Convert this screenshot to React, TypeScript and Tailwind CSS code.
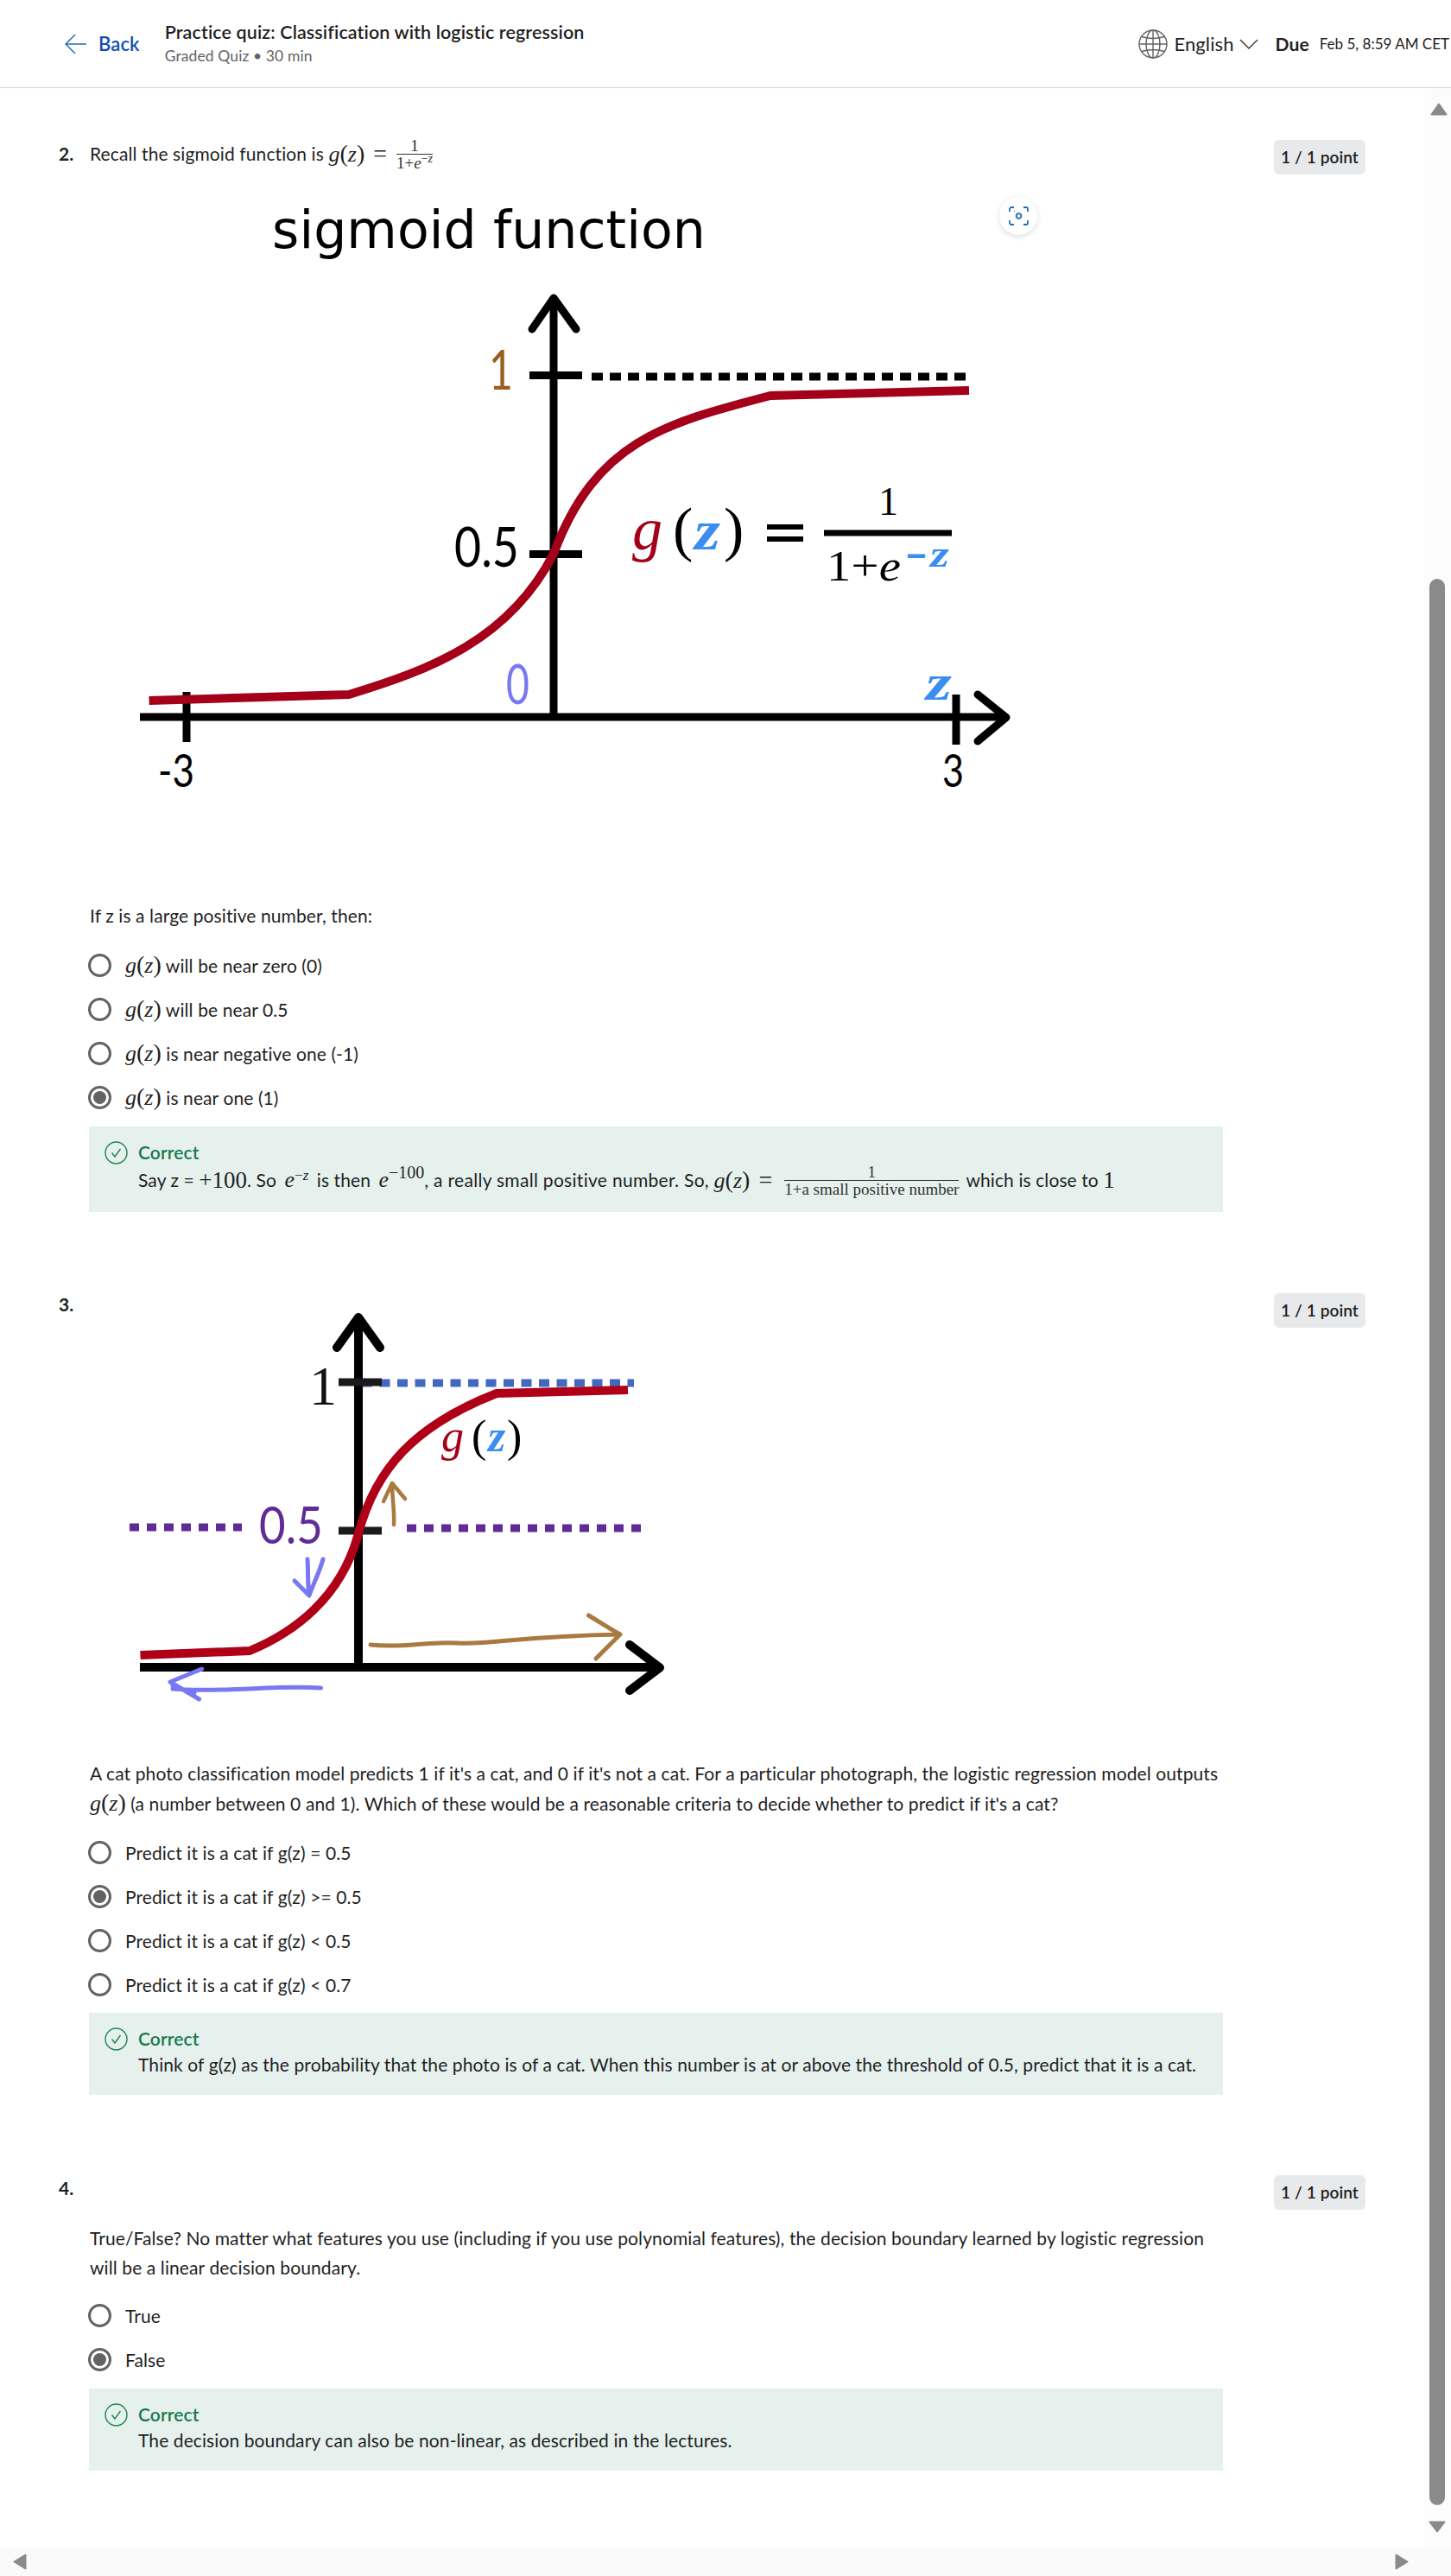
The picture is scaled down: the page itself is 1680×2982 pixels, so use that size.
import type { ReactNode } from "react";

const serif = "font-['Liberation_Serif',serif] tracking-normal";

function G() {
  return (
    <span className={`${serif} text-[26px] whitespace-nowrap tracking-[1.8px]`}>
      <i>g</i>
      <span className="text-[28px]">(</span>
      <i>z</i>
      <span className="text-[28px]">)</span>
    </span>
  );
}

function Frac({ top, bottom, wide }: { top: ReactNode; bottom: ReactNode; wide?: boolean }) {
  return (
    <span className={`${serif} inline-flex flex-col items-center align-middle mr-[8px] text-[#333] text-[19px] leading-[15px] ${wide ? "ml-[14px] tracking-[1.6px]" : "ml-[11px] tracking-[3px]"}`}>
      <span className="pb-[2px]">{top}</span>
      <span className="border-t border-[#333] pt-[2px] w-full text-center whitespace-nowrap">{bottom}</span>
    </span>
  );
}

function Radio({ on, children }: { on?: boolean; children: ReactNode }) {
  return (
    <div className="flex items-center h-[51px] gap-[16px] text-[#1f1f1f]">
      <span className="w-[27px] h-[27px] ml-[-2px] rounded-full border-[3px] border-[#636363] flex items-center justify-center bg-white">
        {on && <span className="w-[15px] h-[15px] rounded-full bg-[#636363]" />}
      </span>
      <span>{children}</span>
    </div>
  );
}

function Feedback({ h, mt, children }: { h: string; mt: string; children: ReactNode }) {
  return (
    <div className={`${h} ${mt} w-[1313px] ml-[-1px] bg-[#e6f1ee] pl-[57px] pt-[15px] relative`}>
      <svg className="absolute left-[18px] top-[17px]" width="27" height="27" viewBox="0 0 27 27" fill="none" stroke="#1f8354" strokeWidth="1.4">
        <circle cx="13.5" cy="13.5" r="12.5" />
        <path d="M8.5 13.5l3.5 4.5 6.5-9" />
      </svg>
      <div className="text-[#18794e] font-semibold leading-[30px]">Correct</div>
      <div className="text-[#1f1f1f] leading-[30px]">{children}</div>
    </div>
  );
}

function Badge({ mt }: { mt: string }) {
  return (
    <div className={`${mt} ml-[59px] w-[106px] h-[40px] rounded-[6px] bg-[#e8e9ea] flex items-center justify-center text-[19px] font-semibold text-[#1f1f1f]`}>
      1 / 1 point
    </div>
  );
}

function SigmoidChart() {
  return (
    <svg className="block" width="1312" height="710" viewBox="104 220 1312 710">
      <text x="315" y="287" fontFamily="DejaVu Sans" fontSize="60" textLength="502" lengthAdjust="spacingAndGlyphs" fill="#000">sigmoid function</text>
      <g stroke="#000" fill="none">
        <path d="M641 830V346" strokeWidth="9" />
        <path d="M616 381L641 345L667 381" strokeWidth="9" strokeLinecap="round" strokeLinejoin="round" />
        <path d="M162 830H1162" strokeWidth="9" />
        <path d="M1132 804L1165 830.5L1132 858" strokeWidth="9" strokeLinecap="round" strokeLinejoin="round" />
        <path d="M613 434.5H674M613 641.5H674" strokeWidth="9" />
        <path d="M685 436H1120" strokeWidth="9" strokeDasharray="13 8" />
        <path d="M216 801V859M1107 804V862" strokeWidth="9" />
      </g>
      <path d="M172.6 811L404 804C500 775 590 740 641 641C690 510 770 490 892 458L1122 452" fill="none" stroke="#a5001a" strokeWidth="10" />
      <g fontFamily="Lato" fontSize="64">
        <text x="566" y="451" fill="#96601f" textLength="28" lengthAdjust="spacingAndGlyphs">1</text>
        <text x="526" y="656" fill="#000" textLength="75" lengthAdjust="spacingAndGlyphs">0.5</text>
        <text x="586" y="815" fill="#7878f0" textLength="27" lengthAdjust="spacingAndGlyphs">0</text>
      </g>
      <g fontFamily="Lato" fontSize="52" fill="#000">
        <text x="183" y="911" textLength="42" lengthAdjust="spacingAndGlyphs">-3</text>
        <text x="1091" y="911" textLength="25" lengthAdjust="spacingAndGlyphs">3</text>
      </g>
      <text x="1072" y="810" fontFamily="Liberation Serif" fontStyle="italic" fontWeight="700" fontSize="60" fill="#3b8df0" textLength="30" lengthAdjust="spacingAndGlyphs">z</text>
      <g fontFamily="Liberation Serif" fontSize="70">
        <text x="732" y="636" fontStyle="italic" fill="#a5001a">g</text>
        <text x="779" y="636" fill="#000">(</text>
        <text x="804" y="636" fontStyle="italic" fontWeight="700" fill="#3b8df0" fontSize="66" textLength="30" lengthAdjust="spacingAndGlyphs">z</text>
        <text x="838" y="636" fill="#000">)</text>
      </g>
      <path d="M888 610H930M888 624H930" stroke="#000" strokeWidth="6" />
      <path d="M954 617H1102" stroke="#000" strokeWidth="7" />
      <text x="1017" y="596" fontFamily="Liberation Serif" fontSize="46" fill="#000">1</text>
      <text x="957" y="672" fontFamily="Liberation Serif" fontSize="50" fill="#000" textLength="86" lengthAdjust="spacingAndGlyphs">1+<tspan fontStyle="italic">e</tspan></text>
      <text x="1049" y="657" fontFamily="Liberation Sans" fontWeight="700" fontSize="40" fill="#3b8df0">−</text>
      <text x="1077" y="656" fontFamily="Liberation Serif" fontStyle="italic" fontWeight="700" fontSize="44" fill="#3b8df0" textLength="22" lengthAdjust="spacingAndGlyphs">z</text>
    </svg>
  );
}

function CatChart() {
  return (
    <svg className="block" width="1312" height="490" viewBox="104 1493 1312 490">
      <g fill="none">
        <path d="M419 1601H734" stroke="#4169c0" strokeWidth="9" strokeDasharray="12 8.5" />
        <path d="M150 1768H280M471 1769H745" stroke="#5e2b97" strokeWidth="9" strokeDasharray="11 9" />
        <path d="M415 1930V1526" stroke="#000" strokeWidth="10" />
        <path d="M390 1560L415 1525L440 1560" stroke="#000" strokeWidth="10" strokeLinecap="round" strokeLinejoin="round" />
        <path d="M162 1930H762" stroke="#000" strokeWidth="10" />
        <path d="M729 1904L764 1930.5L729 1957" stroke="#000" strokeWidth="10" strokeLinecap="round" strokeLinejoin="round" />
        <path d="M392 1600H442M392 1772H442" stroke="#1a1a1a" strokeWidth="9" />
        <path d="M162.5 1916L289 1911C340 1890 395 1850 415 1775C435 1700 480 1650 575 1613L727 1609" stroke="#b00018" strokeWidth="10" />
        <path d="M456 1765C457 1750 454 1735 454 1717M444 1738L454 1717L469 1735" stroke="#a97a3f" strokeWidth="4.5" strokeLinecap="round" strokeLinejoin="round" />
        <path d="M374 1805C370 1820 362 1835 358 1847C356 1835 357 1818 356 1805M341 1830L358 1847" stroke="#7878f5" strokeWidth="5" strokeLinecap="round" strokeLinejoin="round" />
        <path d="M429 1904C470 1908 490 1900 530 1902C570 1904 600 1894 718 1892M681.5 1870C695 1878 705 1885 718 1892C708 1902 698 1912 690 1920" stroke="#a97a3f" strokeWidth="5" strokeLinecap="round" strokeLinejoin="round" />
        <path d="M371.5 1954C320 1950 260 1960 200 1955M233.6 1932L197 1947L230.6 1967M200 1952L225 1960" stroke="#7878f5" strokeWidth="5" strokeLinecap="round" strokeLinejoin="round" />
      </g>
      <text x="358" y="1626" fontFamily="Liberation Serif" fontSize="64" fill="#111">1</text>
      <text x="300" y="1787" fontFamily="Lato" fontSize="60" fill="#5e2b97" textLength="74" lengthAdjust="spacingAndGlyphs">0.5</text>
      <g fontFamily="Liberation Serif" fontSize="52">
        <text x="511" y="1680" fontStyle="italic" fill="#a8001a">g</text>
        <text x="546" y="1680" fill="#000">(</text>
        <text x="565" y="1680" fontStyle="italic" fontWeight="700" fill="#3b8df0">z</text>
        <text x="587" y="1680" fill="#000">)</text>
      </g>
    </svg>
  );
}

export default function App() {
  return (
    <div className="w-[1680px] h-[2982px] bg-white flex flex-col overflow-hidden font-['Lato',sans-serif] text-[21px] leading-[34px] tracking-[0.1px] text-[#1f1f1f]">
      {/* top bar */}
      <header className="h-[102px] shrink-0 border-b border-[#d5d5d5] flex items-center">
        <div className="ml-[75px] flex items-center">
          <svg width="25" height="24" viewBox="0 0 25 24" fill="none" stroke="#2a6ab8" strokeWidth="1.5">
            <path d="M25 12H1M12 1L1 12l11 11" />
          </svg>
          <span className="ml-[14px] text-[22px] font-semibold text-[#0f4fb0]">Back</span>
        </div>
        <div className="ml-[29px] flex flex-col">
          <span className="text-[21.5px] leading-[28px] font-semibold whitespace-nowrap">Practice quiz: Classification with logistic regression</span>
          <span className="text-[17.5px] leading-[28px] text-[#636363]">Graded Quiz • 30 min</span>
        </div>
        <div className="ml-auto flex items-center">
          <svg width="34" height="34" viewBox="0 0 34 34" fill="none" stroke="#636363" strokeWidth="1.4">
            <circle cx="17" cy="17" r="16" />
            <ellipse cx="17" cy="17" rx="8" ry="16" />
            <path d="M17 1V33M1 17H33M4 8.5C12 11 22 11 30 8.5M4 25.5C12 23 22 23 30 25.5" />
          </svg>
          <span className="ml-[7px] text-[22px]">English</span>
          <svg className="ml-[6px]" width="22" height="12" viewBox="0 0 22 12" fill="none" stroke="#333" strokeWidth="1.4">
            <path d="M1 1l10 10L21 1" />
          </svg>
          <span className="ml-[20px] text-[21px] font-bold">Due</span>
          <span className="ml-[12px] mr-[2px] text-[17px] whitespace-nowrap tracking-normal">Feb 5, 8:59 AM CET</span>
        </div>
      </header>

      <div className="flex-1 flex min-h-0">
        <main className="flex-1 pl-[68px]">
          {/* question 2 */}
          <section className="flex items-start pt-[56px]">
            <div className="w-[36px] h-[40px] flex items-center font-bold">2.</div>
            <div className="w-[1312px]">
              <div className="h-[40px] flex items-center">
                <span>Recall the sigmoid function is&nbsp;</span>
                <G />
                <span className={`${serif} text-[28px] ml-[10px]`}>=</span>
                <Frac top="1" bottom={<>1+<i>e</i><sup className="text-[14px]">−<i>z</i></sup></>} />
              </div>
              <div className="mt-[22px] relative">
                <SigmoidChart />
                <div className="absolute left-[1053px] top-[8px] w-[44px] h-[44px] rounded-full bg-white shadow-[0_2px_6px_rgba(0,0,0,0.14)] flex items-center justify-center">
                  <svg width="23" height="22" viewBox="0 0 23 22" fill="none" stroke="#2a6ab0" strokeWidth="1.8">
                    <path d="M1 6V3a2 2 0 012-2h3M17 1h3a2 2 0 012 2v3M22 16v3a2 2 0 01-2 2h-3M6 21H3a2 2 0 01-2-2v-3" />
                    <circle cx="11.5" cy="11" r="2.8" />
                    <path d="M6 5.5h.6" />
                  </svg>
                </div>
              </div>
              <p className="mt-[113px]">If z is a large positive number, then:</p>
              <div className="mt-[15px]">
                <Radio><G /> will be near zero (0)</Radio>
                <Radio><G /> will be near 0.5</Radio>
                <Radio><G /> is near negative one (-1)</Radio>
                <Radio on><G /> is near one (1)</Radio>
              </div>
              <Feedback h="h-[99px]" mt="mt-[8px]">
                <div className="flex items-center h-[34px] whitespace-nowrap">
                  <span>Say z =&nbsp;</span>
                  <span className={`${serif} text-[27px]`}>+100</span>
                  <span>. So&nbsp;</span>
                  <span className={`${serif} text-[26px] ml-[4px] mr-[4px]`}><i>e</i><sup className="text-[17px]">−<i>z</i></sup></span>
                  <span>&nbsp;is then&nbsp;</span>
                  <span className={`${serif} text-[26px] ml-[4px]`}><i>e</i><sup className="text-[20px]">−100</sup></span>
                  <span className="tracking-[0.3px]">, a really small positive number. So,&nbsp;</span>
                  <G />
                  <span className={`${serif} text-[28px] ml-[10px]`}>=</span>
                  <Frac wide top="1" bottom="1+a small positive number" />
                  <span>which is close to&nbsp;</span>
                  <span className={`${serif} text-[27px]`}>1</span>
                </div>
              </Feedback>
            </div>
            <Badge mt="mt-[4px]" />
          </section>

          {/* question 3 */}
          <section className="flex items-start mt-[90px]">
            <div className="w-[36px] font-bold">3.</div>
            <div className="w-[1312px]">
              <CatChart />
              <p className="mt-[53px] whitespace-nowrap">A cat photo classification model predicts 1 if it's a cat, and 0 if it's not a cat. For a particular photograph, the logistic regression model outputs</p>
              <p><G /> (a number between 0 and 1). Which of these would be a reasonable criteria to decide whether to predict if it's a cat?</p>
              <div className="mt-[14px]">
                <Radio>Predict it is a cat if g(z) = 0.5</Radio>
                <Radio on>Predict it is a cat if g(z) &gt;= 0.5</Radio>
                <Radio>Predict it is a cat if g(z) &lt; 0.5</Radio>
                <Radio>Predict it is a cat if g(z) &lt; 0.7</Radio>
              </div>
              <Feedback h="h-[95px]" mt="mt-[7px]">
                Think of g(z) as the probability that the photo is of a cat. When this number is at or above the threshold of 0.5, predict that it is a cat.
              </Feedback>
            </div>
            <Badge mt="mt-[4px]" />
          </section>

          {/* question 4 */}
          <section className="flex items-start mt-[91px]">
            <div className="w-[36px] font-bold">4.</div>
            <div className="w-[1312px]">
              <p className="mt-[58px] whitespace-nowrap">True/False? No matter what features you use (including if you use polynomial features), the decision boundary learned by logistic regression</p>
              <p>will be a linear decision boundary.</p>
              <div className="mt-[13px]">
                <Radio>True</Radio>
                <Radio on>False</Radio>
              </div>
              <Feedback h="h-[95px]" mt="mt-[8px]">
                The decision boundary can also be non-linear, as described in the lectures.
              </Feedback>
            </div>
            <Badge mt="mt-[2px]" />
          </section>
        </main>

        {/* vertical scrollbar */}
        <aside className="w-[31px] shrink-0 bg-[#fcfcfc] flex flex-col items-center">
          <svg className="mt-[17px] ml-[2px]" width="20" height="15" viewBox="0 0 20 15" fill="#8a8a8a" stroke="#8a8a8a" strokeWidth="2" strokeLinejoin="round">
            <path d="M10 1.5L18.5 13.5H1.5z" />
          </svg>
          <div className="mt-[536px] ml-[-2px] w-[18px] h-[1230px] flex-1 rounded-full bg-[#8a8a8a]" />
          <svg className="mt-[18px] mb-[17px] ml-[-1px]" width="20" height="14" viewBox="0 0 20 14" fill="#8a8a8a" stroke="#8a8a8a" strokeWidth="2" strokeLinejoin="round">
            <path d="M10 12.5L18.5 1.5H1.5z" />
          </svg>
        </aside>
      </div>

      {/* horizontal scrollbar */}
      <footer className="h-[33px] shrink-0 bg-[#fafafa] flex items-center justify-between pl-[15px] pr-[49px]">
        <svg width="16" height="19" viewBox="0 0 16 19" fill="#8a8a8a" stroke="#8a8a8a" strokeWidth="2" strokeLinejoin="round">
          <path d="M1.5 9.5L14.5 1.5V17.5z" />
        </svg>
        <svg width="16" height="19" viewBox="0 0 16 19" fill="#8a8a8a" stroke="#8a8a8a" strokeWidth="2" strokeLinejoin="round">
          <path d="M14.5 9.5L1.5 1.5V17.5z" />
        </svg>
      </footer>
    </div>
  );
}
